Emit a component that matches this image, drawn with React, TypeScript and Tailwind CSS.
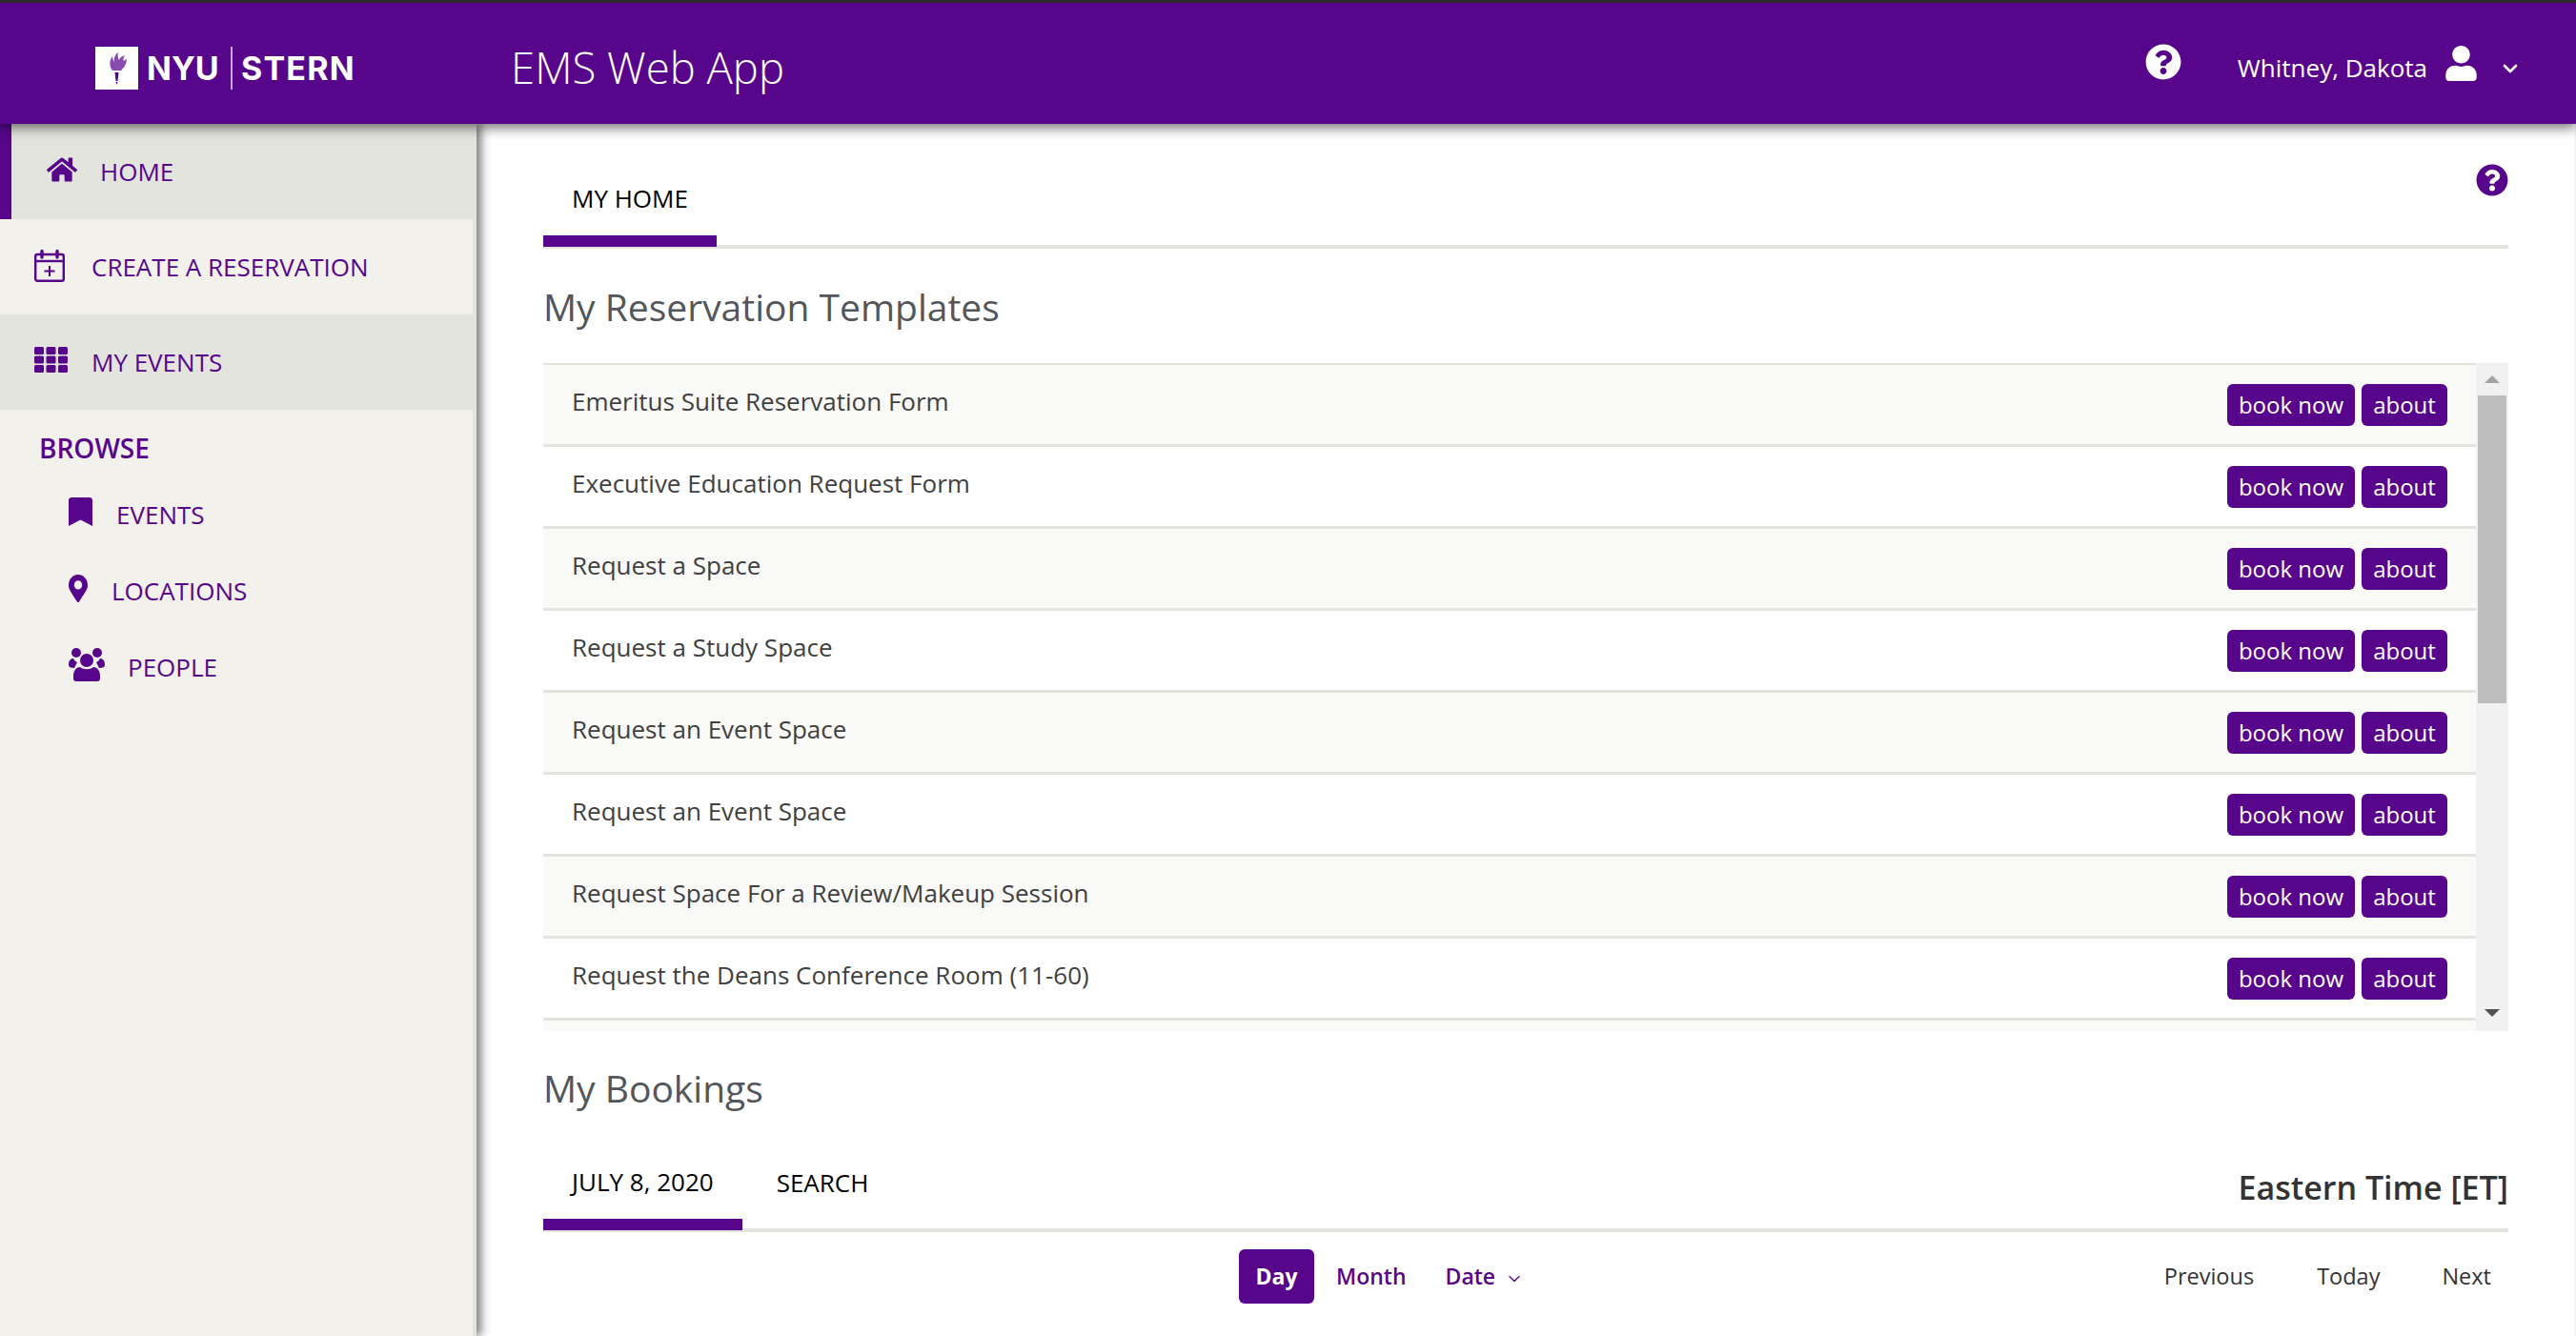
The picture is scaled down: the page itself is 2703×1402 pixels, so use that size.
import React from 'react';
import { FaHome, FaBookmark, FaMapMarkerAlt, FaUser, FaQuestionCircle } from 'react-icons/fa';
import { ChevronDown } from 'lucide-react';

const templates = [
    'Emeritus Suite Reservation Form',
    'Executive Education Request Form',
    'Request a Space',
    'Request a Study Space',
    'Request an Event Space',
    'Request an Event Space',
    'Request Space For a Review/Makeup Session',
    'Request the Deans Conference Room (11-60)',
];

const Torch = () => (
    <svg viewBox="0 0 45 45" className="w-[45px] h-[45px]">
        <path d="M20.5 27 L24.5 27 L23.5 36 L21.5 36 Z M21.5 37 L23.5 37 L22.5 40 Z" fill="#57068c" />
        <path d="M18 25 C14 20 15 14 18 10 C18 13 19 15 20 16 C19 12 21 8 24 6 C23 10 24 12 25 14 C26 11 28 10 31 9 C29 12 29 14 30 15 C31 14 32 14 33 13 C33 18 30 22 27 25 Z" fill="#8a4bb0" />
    </svg>
);

const CalendarPlus = () => (
    <svg viewBox="0 0 32 35" className="w-8 h-[35px] shrink-0 -mt-[3px]" fill="none" stroke="#57068c">
        <rect x="1.2" y="6" width="29.6" height="27.8" rx="2" strokeWidth="2.4" />
        <path d="M1 13 H31" strokeWidth="2.4" />
        <path d="M8 9 V2.5 M24 9 V2.5" strokeWidth="3.4" strokeLinecap="round" />
        <path d="M16 18 V29 M10.5 23.5 H21.5" strokeWidth="2" />
    </svg>
);

const Grid = () => (
    <svg viewBox="0 0 35 27" className="w-[35px] h-[27px] shrink-0 -mt-[6px]" fill="#57068c">
        {[0, 9.5, 19].map((y) =>
            [0, 12.5, 25].map((x) => <rect key={`${x}-${y}`} x={x} y={y} width="10" height="8" rx="1.5" />)
        )}
    </svg>
);

const People = () => (
    <svg viewBox="0 0 38 35" className="w-[38px] h-[35px] shrink-0 -mt-[5px]" fill="#57068c">
        <circle cx="8" cy="5" r="5" />
        <circle cx="30" cy="5" r="5" />
        <path d="M0 18 C0 13 2 11 5 11 C6 13 7 14 9 15 C8 17 7 19 6 21 C2 21 0 20 0 18 Z" />
        <path d="M38 18 C38 13 36 11 33 11 C32 13 31 14 29 15 C30 17 31 19 32 21 C36 21 38 20 38 18 Z" />
        <circle cx="19" cy="13" r="7" />
        <path d="M5 29 C5 24 8 20 12 20 C15 23 23 23 26 20 C30 20 33 24 33 29 V32 C33 34 32 35 30 35 H8 C6 35 5 34 5 32 Z" />
    </svg>
);

const App: React.FC = () => {
    return (
        <div className="h-screen w-screen overflow-hidden flex flex-col bg-white font-['Open_Sans',sans-serif] border-t-[3px] border-[#2b2b2b]">
            <header className="relative z-20 h-[127px] shrink-0 pt-[10px] bg-[#57068c] flex items-center text-white shadow-[0_4px_12px_rgba(0,0,0,0.55)]">
                <div className="w-[536px] pl-[100px] shrink-0 flex items-center h-[45px]">
                    <div className="w-[45px] h-[45px] bg-white shrink-0"><Torch /></div>
                    <span className="ml-[9px] w-[88px] font-['Inter',sans-serif] font-bold text-[34px] leading-none">NYU</span>
                    <div className="w-[2px] h-[45px] bg-[#c9a8de]" />
                    <span className="ml-[9px] font-['Inter',sans-serif] font-bold text-[34px] tracking-[1.2px] leading-none">STERN</span>
                </div>
                <div className="text-[45.5px] font-light leading-none -mt-[2px]">EMS Web App</div>
                <div className="ml-auto flex items-center pr-[57px]">
                    <FaQuestionCircle className="text-[38px] -mt-[13px]" />
                    <span className="ml-[59px] text-[26px] leading-none -mt-[2px]">Whitney, Dakota</span>
                    <FaUser className="ml-[17px] text-[37px] -mt-[11px]" />
                    <ChevronDown size={24} strokeWidth={2.6} className="ml-[21px]" />
                </div>
            </header>

            <div className="flex flex-1 min-h-0">
                <aside className="relative z-10 w-[500px] shrink-0 bg-[#f2f1eb] border-r-4 border-[#e4e4df] shadow-[5px_0_9px_rgba(0,0,0,0.5)] text-[#57068c] text-[26px]">
                    <div className="h-[100px] bg-[#e4e4df] border-l-[12px] border-[#57068c] flex items-center pl-[37px]">
                        <FaHome className="text-[32px] shrink-0 -mt-[5px]" />
                        <span className="ml-[24px]">HOME</span>
                    </div>
                    <div className="h-[100px] flex items-center pl-[36px]">
                        <CalendarPlus />
                        <span className="ml-[28px]">CREATE A RESERVATION</span>
                    </div>
                    <div className="h-[100px] bg-[#e4e4df] flex items-center pl-[36px]">
                        <Grid />
                        <span className="ml-[25px]">MY EVENTS</span>
                    </div>
                    <div className="pl-[41px] mt-[22px] h-[36px] flex items-center font-semibold text-[28px]">BROWSE</div>
                    <div className="pl-[72px] mt-[34px] flex flex-col gap-[44px]">
                        <div className="flex items-center h-[36px]">
                            <FaBookmark preserveAspectRatio="none" className="w-[25px] h-[30px] shrink-0 -mt-[6px]" />
                            <span className="ml-[25px]">EVENTS</span>
                        </div>
                        <div className="flex items-center h-[36px]">
                            <FaMapMarkerAlt preserveAspectRatio="none" className="w-[20px] h-[29px] shrink-0 -mt-[5px]" />
                            <span className="ml-[25px]">LOCATIONS</span>
                        </div>
                        <div className="flex items-center h-[36px]">
                            <People />
                            <span className="ml-[24px]">PEOPLE</span>
                        </div>
                    </div>
                </aside>

                <main className="flex-1 min-w-0 pl-[70px] pr-[70px] border-r border-[#ececec]">
                    {/* top tabs */}
                    <div className="h-[131px] border-b-4 border-[#e4e4df] flex items-start justify-between">
                        <div className="mt-[57px] h-[72px] pb-[18px] px-[30px] border-b-[12px] border-[#57068c] text-[26px] text-black flex items-center leading-none">MY HOME</div>
                        <FaQuestionCircle className="mt-[42px] text-[34px] text-[#57068c]" />
                    </div>

                    <h2 className="mt-[38px] h-[45px] text-[39px] leading-[45px] text-[#53565a] font-normal">My Reservation Templates</h2>

                    {/* templates list */}
                    <div className="mt-[37px] h-[701px] flex">
                        <div className="flex-1 min-w-0 overflow-hidden border-t-2 border-[#e4e4df]">
                            {templates.map((t, i) => (
                                <div key={i} className={`h-[86px] flex items-center justify-between pl-[30px] pr-[30px] border-b-[3px] border-[#e4e4df] ${i % 2 === 0 ? 'bg-[#f9f9f7]' : 'bg-white'}`}>
                                    <span className="text-[26px] text-[#404040] -mt-[7px]">{t}</span>
                                    <div className="flex gap-[7px] text-[24px] text-white leading-none">
                                        <button className="w-[134px] h-[44px] rounded-[6px] bg-[#57068c]">book now</button>
                                        <button className="w-[90px] h-[44px] rounded-[6px] bg-[#57068c]">about</button>
                                    </div>
                                </div>
                            ))}
                            <div className="h-[20px] bg-[#f9f9f7]" />
                        </div>
                        <div className="w-[34px] shrink-0 bg-[#f1f1f1] flex flex-col items-center">
                            <div className="h-[34px] shrink-0 flex items-center justify-center">
                                <div className="w-0 h-0 border-x-[8px] border-x-transparent border-b-[8px] border-b-[#a3a3a3]" />
                            </div>
                            <div className="w-[30px] h-[323px] bg-[#bebebe]" />
                            <div className="mt-auto mb-[2px] h-[34px] shrink-0 flex items-center justify-center">
                                <div className="w-0 h-0 border-x-[8px] border-x-transparent border-t-[8px] border-t-[#505050]" />
                            </div>
                        </div>
                    </div>

                    <h2 className="mt-[37px] h-[45px] text-[39px] leading-[45px] text-[#53565a] font-normal">My Bookings</h2>

                    {/* bookings tabs */}
                    <div className="mt-[55px] h-[74px] border-b-4 border-[#e4e4df] flex items-start">
                        <div className="h-[72px] pb-[19px] px-[30px] border-b-[12px] border-[#57068c] text-[26px] text-black flex items-center leading-none">JULY 8, 2020</div>
                        <div className="h-[44px] ml-[36px] text-[26px] text-black flex items-center leading-none">SEARCH</div>
                        <div className="ml-auto mt-[4px] text-[34px] font-semibold text-[#333] leading-[46px]">Eastern Time [ET]</div>
                    </div>

                    {/* calendar toolbar */}
                    <div className="mt-[18px] flex items-center h-[57px]">
                        <div className="ml-[730px] flex items-center text-[23px] text-[#57068c] font-semibold">
                            <span className="w-[79px] h-[57px] rounded-[6px] bg-[#57068c] text-white font-bold flex items-center justify-center">Day</span>
                            <span className="ml-[23px]">Month</span>
                            <span className="ml-[41px]">Date</span>
                            <ChevronDown size={20} strokeWidth={1.6} className="ml-[10px] mt-[4px]" />
                        </div>
                        <div className="ml-auto flex items-center text-[23.5px] text-[#333] pr-[18px]">
                            <span>Previous</span>
                            <span className="ml-[66px]">Today</span>
                            <span className="ml-[65px]">Next</span>
                        </div>
                    </div>
                </main>
            </div>
        </div>
    );
};

export default App;
